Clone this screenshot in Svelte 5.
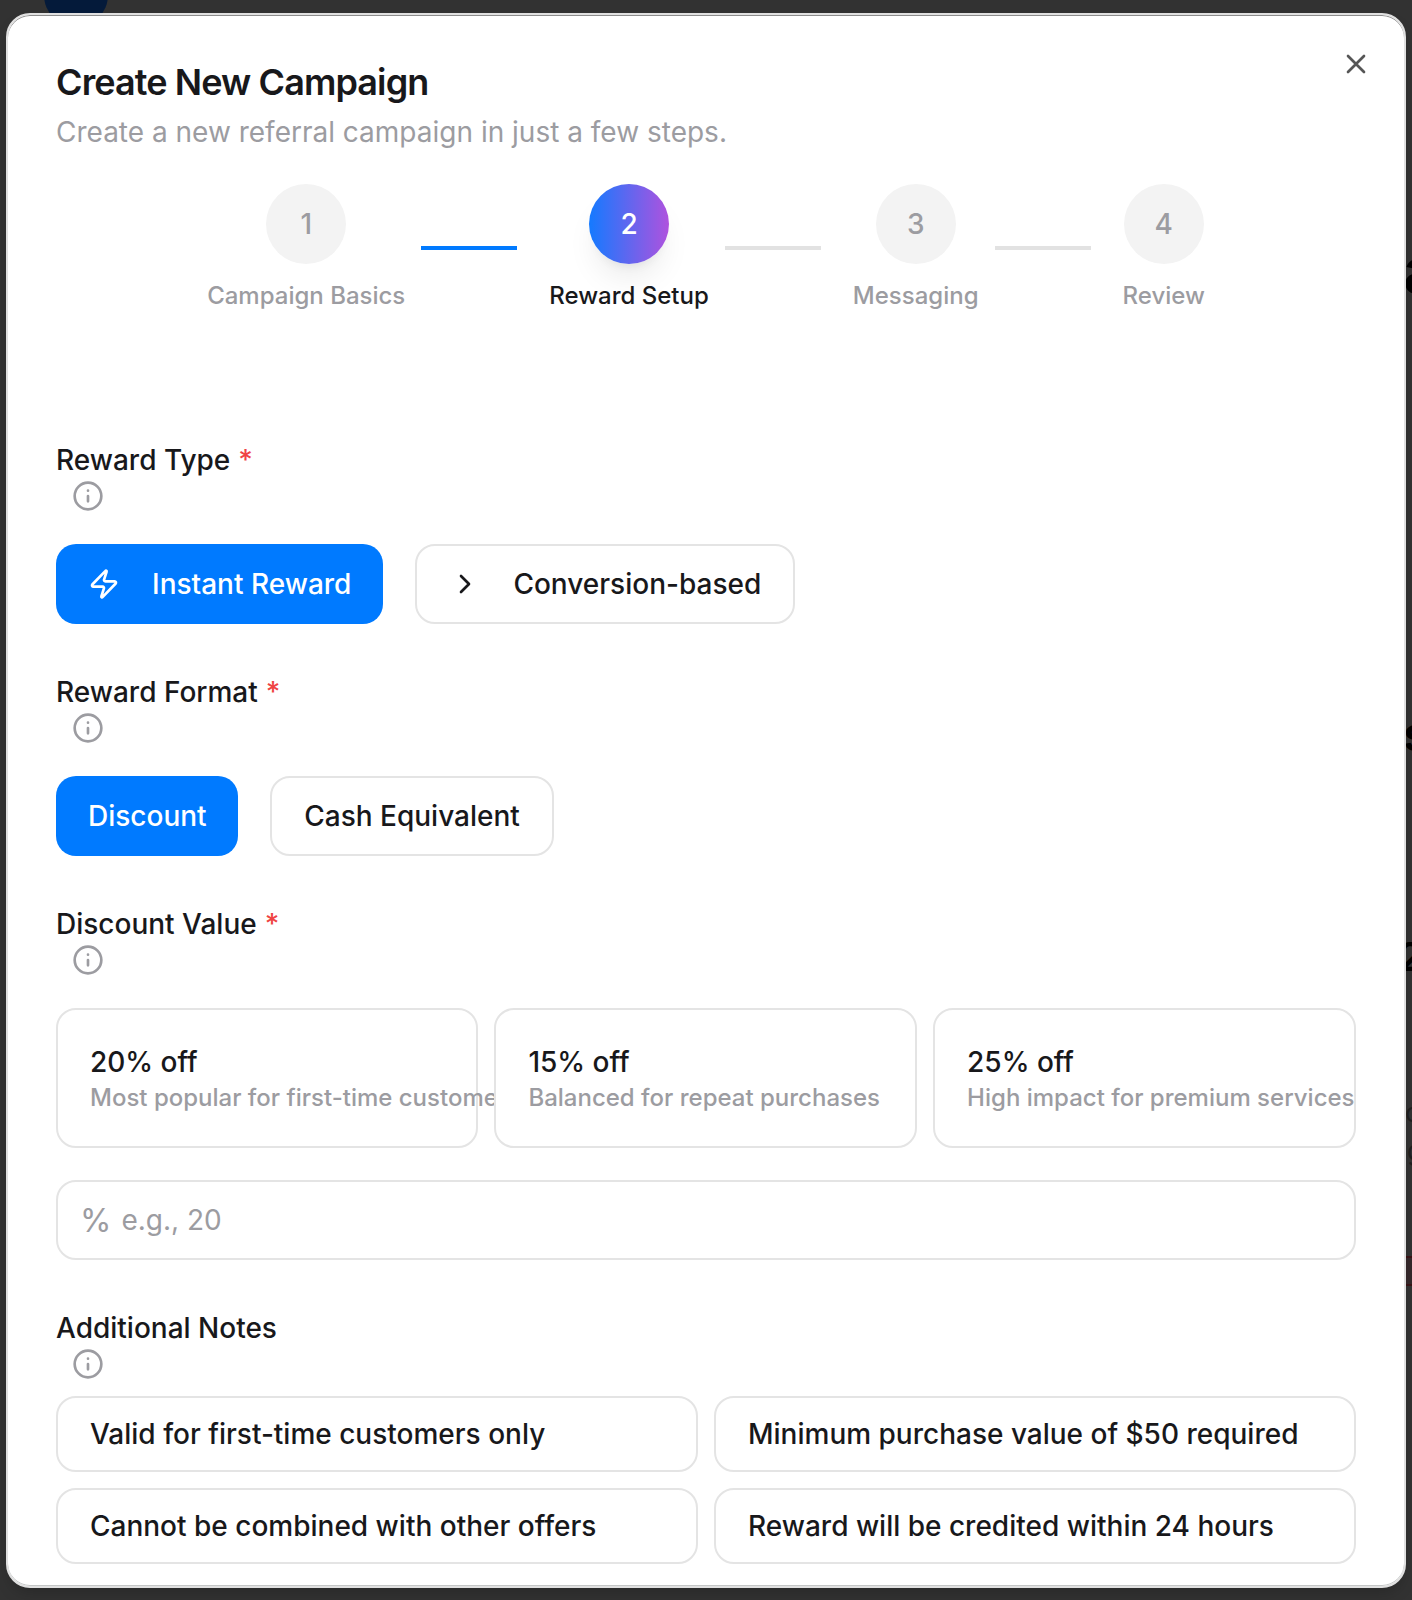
<script>
  const steps = [
    { n: 1, label: 'Campaign Basics', line: 'done' },
    { n: 2, label: 'Reward Setup', active: true, line: 'todo' },
    { n: 3, label: 'Messaging', line: 'todo' },
    { n: 4, label: 'Review' }
  ];
  const presets = [
    { title: '20% off', text: 'Most popular for first-time customers' },
    { title: '15% off', text: 'Balanced for repeat purchases' },
    { title: '25% off', text: 'High impact for premium services' }
  ];
  const notes = [
    'Valid for first-time customers only',
    'Minimum purchase value of $50 required',
    'Cannot be combined with other offers',
    'Reward will be credited within 24 hours'
  ];
</script>

{#snippet fieldLabel(text, required)}
  <div class="label">{text}{#if required}<span class="req">*</span>{/if}</div>
  <svg class="icon info" viewBox="0 0 24 24"><circle cx="12" cy="12" r="10" /><path d="M12 16v-4M12 8h.01" /></svg>
{/snippet}

<div class="page">
  <!-- dimmed page behind the dialog -->
  <div class="avatar"></div>
  <span class="ghost g1">a</span>
  <span class="ghost g2">s</span>
  <span class="ghost g3">2</span>
  <span class="ghost g4">c</span>
  <span class="ghost g5">g</span>
  <span class="chip"></span>

  <main class="dialog">
    <button class="close" aria-label="Close">
      <svg class="icon" viewBox="0 0 24 24"><path d="M18 6 6 18M6 6l12 12" /></svg>
    </button>
    <h1>Create New Campaign</h1>
    <p class="sub">Create a new referral campaign in just a few steps.</p>

    <div class="steps">
      {#each steps as s}
        <div class="step" class:active={s.active}>
          <div class="circle">{s.n}</div>
          <div class="name">{s.label}</div>
        </div>
        {#if s.line}<div class="line {s.line}"></div>{/if}
      {/each}
    </div>

    <section>
      {@render fieldLabel('Reward Type', true)}
      <div class="buttons">
        <button class="btn primary">
          <svg class="icon" viewBox="0 0 24 24"><path d="M4 14a1 1 0 0 1-.78-1.63l9.9-10.2a.5.5 0 0 1 .86.46l-1.92 6.02A1 1 0 0 0 13 10h7a1 1 0 0 1 .78 1.63l-9.9 10.2a.5.5 0 0 1-.86-.46l1.92-6.02A1 1 0 0 0 11 14z" /></svg>
          Instant Reward
        </button>
        <button class="btn">
          <svg class="icon" viewBox="0 0 24 24"><path d="m9 18 6-6-6-6" /></svg>
          Conversion-based
        </button>
      </div>
    </section>

    <section>
      {@render fieldLabel('Reward Format', true)}
      <div class="buttons">
        <button class="btn primary compact">Discount</button>
        <button class="btn">Cash Equivalent</button>
      </div>
    </section>

    <section>
      {@render fieldLabel('Discount Value', true)}
      <div class="presets">
        {#each presets as p}
          <button class="card">
            <span class="ct">{p.title}</span>
            <span class="cd">{p.text}</span>
          </button>
        {/each}
      </div>
      <div class="input"><span class="pct">%</span><span>e.g., 20</span></div>
    </section>

    <section>
      {@render fieldLabel('Additional Notes', false)}
      <div class="notes">
        {#each notes as n}<button class="note">{n}</button>{/each}
      </div>
    </section>
  </main>
</div>

<style>
  :global(body) { background: #333; overflow: hidden; }
  * { box-sizing: border-box; }
  .page {
    position: relative;
    height: 1600px;
    width: 1412px;
    overflow: hidden;
    padding: 13px 6px 12px;
    background: #323232;
    font-family: Inter, sans-serif;
    color: #18181b;
  }
  .avatar {
    position: absolute;
    left: 44px;
    top: -37px;
    width: 64px;
    height: 64px;
    border-radius: 50%;
    background: #041a3a;
  }
  .ghost { position: absolute; left: 1403px; color: #000; line-height: 1; font-weight: 600; }
  .g1 { top: 238px; font-size: 64px; }
  .g2 { top: 710px; font-size: 48px; }
  .g3 { top: 937px; font-size: 40px; left: 1398px; }
  .g4 { top: 1100px; font-size: 26px; font-weight: 400; color: #1f1f1f; left: 1405px; }
  .g5 { top: 1138px; font-size: 26px; font-weight: 400; color: #1f1f1f; left: 1407px; }
  .chip {
    position: absolute;
    left: 1400px;
    top: 1256px;
    width: 40px;
    height: 30px;
    border: 2px solid #3a1417;
    background: #35282a;
  }
  .dialog {
    position: relative;
    height: 1575px;
    border: 2px solid #e0e0e0;
    border-radius: 24px;
    background: #fff;
    box-shadow: 0 8px 16px -4px rgba(0, 0, 0, 0.2), inset 0 1px 0 #8c8c8c, inset 0 -1px 0 #c4c6c6;
    padding: 47px 48px 0;
    overflow: hidden;
  }
  button { font: inherit; color: inherit; background: #fff; margin: 0; }
  .icon {
    display: block;
    flex: none;
    width: 32px;
    height: 32px;
    fill: none;
    stroke: currentColor;
    stroke-width: 2;
    stroke-linecap: round;
    stroke-linejoin: round;
  }
  .close {
    position: absolute;
    top: 33px;
    right: 32px;
    padding: 0;
    border: 0;
    color: #565656;
  }
  h1 { margin: 0; font-size: 36px; line-height: 40px; font-weight: 600; letter-spacing: -0.9px; }
  .sub { margin: 10px 0 0; font-size: 28px; line-height: 40px; color: #9c9ca1; }
  .steps { display: flex; justify-content: center; margin-top: 32px; height: 128px; }
  .step { display: flex; flex-direction: column; align-items: center; color: #9c9ca1; }
  .circle {
    display: flex;
    align-items: center;
    justify-content: center;
    width: 80px;
    height: 80px;
    border-radius: 50%;
    background: #f3f3f3;
    font-size: 28px;
    font-weight: 500;
  }
  .name { margin-top: 16px; font-size: 24px; line-height: 32px; font-weight: 500; white-space: nowrap; }
  .active { color: #18181b; }
  .active .circle {
    color: #fff;
    background: linear-gradient(90deg, #147aff, #af52de);
    box-shadow: 0 20px 30px -6px rgba(0, 0, 0, 0.08), 0 8px 12px -8px rgba(0, 0, 0, 0.1);
  }
  .line { width: 96px; height: 4px; margin: 62px 32px 0 16px; background: #e2e2e2; }
  .done { background: #007aff; }
  section { margin-top: 48px; }
  .steps + section { margin-top: 128px; }
  .label { font-size: 28px; line-height: 40px; font-weight: 500; white-space: nowrap; }
  .req { margin-left: 8px; color: #ef4444; }
  .info { margin-left: 16px; color: #9c9ca1; }
  .buttons { display: flex; gap: 32px; margin-top: 32px; }
  .btn {
    display: flex;
    align-items: center;
    gap: 32px;
    height: 80px;
    padding: 0 32px;
    border: 2px solid #e4e4e4;
    border-radius: 20px;
    font-size: 28px;
    font-weight: 500;
    white-space: nowrap;
  }
  .primary { border: 0; background: #007aff; color: #fff; }
  .compact { padding-right: 31.6px; }
  .presets { display: grid; grid-template-columns: 422.4fr 422.7fr 422.9fr; gap: 16px; margin-top: 32px; }
  .card {
    display: flex;
    flex-direction: column;
    justify-content: center;
    min-width: 0;
    height: 140px;
    padding: 0 32px;
    border: 2px solid #e4e4e4;
    border-radius: 20px;
    text-align: left;
    font-weight: 500;
    white-space: nowrap;
    position: relative;
  }
  .ct { font-size: 28px; line-height: 40px; }
  .cd { font-size: 24px; line-height: 32px; color: #9c9ca1; }
  .input {
    display: flex;
    align-items: center;
    gap: 10px;
    height: 80px;
    margin-top: 32px;
    padding: 0 22px;
    border: 2px solid #e4e4e4;
    border-radius: 20px;
    font-size: 28px;
    color: #9c9ca1;
  }
  .pct { font-size: 32px; }
  .notes { display: grid; grid-template-columns: 1fr 1fr; gap: 16px; margin-top: 16px; }
  .note {
    height: 76px;
    padding: 0 32px;
    border: 2px solid #e4e4e4;
    border-radius: 20px;
    font-size: 28px;
    font-weight: 500;
    text-align: left;
    white-space: nowrap;
  }
</style>
